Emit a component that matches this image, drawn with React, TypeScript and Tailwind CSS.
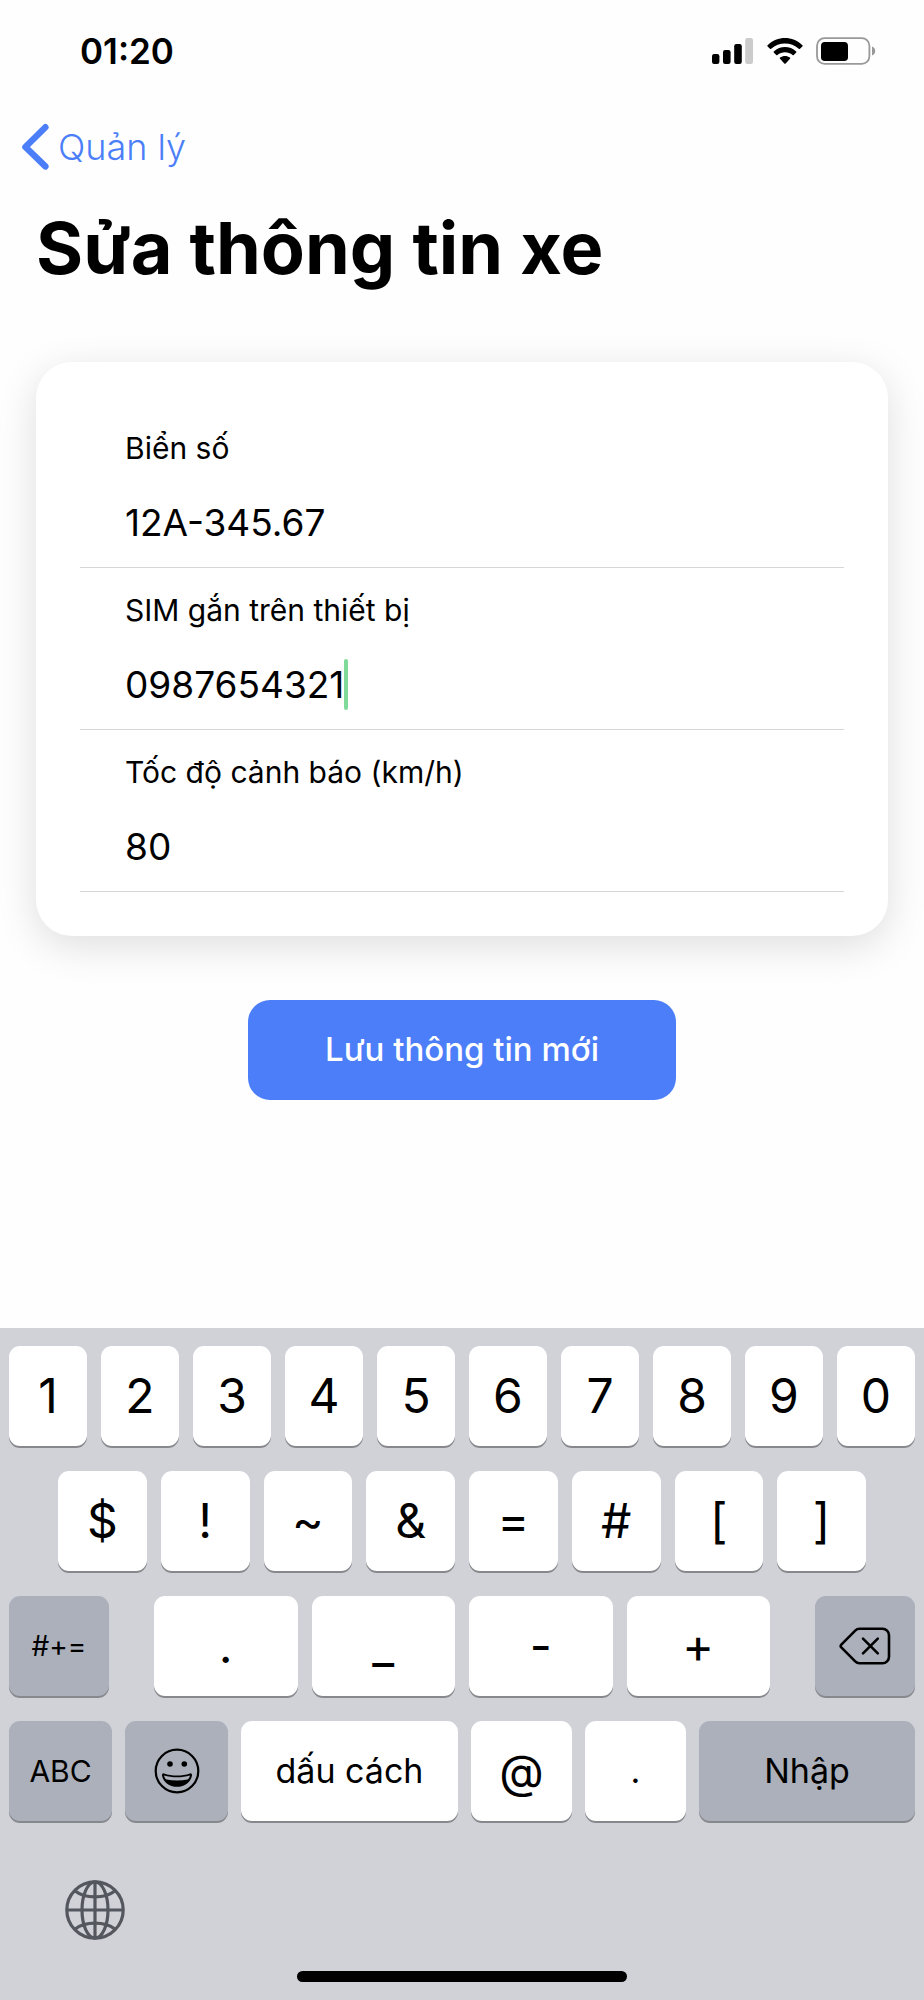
import { useState } from "react";
import type { ReactNode } from "react";

function SignalIcon() {
  return (
    <svg width="42" height="28" viewBox="0 0 42 28" aria-hidden="true">
      <rect x="0" y="17" width="7.4" height="10" rx="2.2" />
      <rect x="11" y="13" width="7.6" height="14" rx="2.2" />
      <rect x="22.2" y="7" width="7.6" height="20" rx="2.2" />
      <rect x="33.2" y="1" width="7.8" height="26" rx="2.2" fill="#cbcbcb" />
    </svg>
  );
}

function WifiIcon() {
  return (
    <svg width="36" height="28" viewBox="0 0 36 28" aria-hidden="true">
      <path d="M0.6 8.2 C10.4 -1.4 25.6 -1.4 35.4 8.2 C35.8 8.6 35.8 9 35.4 9.4 L33 11.8 C32.6 12.2 32.2 12.2 31.8 11.8 C24 4.6 12 4.6 4.2 11.8 C3.8 12.2 3.4 12.2 3 11.8 L0.6 9.4 C0.2 9 0.2 8.6 0.6 8.2 Z" />
      <path d="M6.8 14.4 C13.2 8.6 22.8 8.6 29.2 14.4 C29.6 14.8 29.6 15.2 29.2 15.6 L26.8 18 C26.4 18.4 26 18.4 25.6 18 C21.2 14.2 14.8 14.2 10.4 18 C10 18.4 9.6 18.4 9.2 18 L6.8 15.6 C6.4 15.2 6.4 14.8 6.8 14.4 Z" />
      <path d="M13 20.6 C15.9 18.5 20.1 18.5 23 20.6 C23.4 20.9 23.4 21.4 23 21.8 L18.7 26.4 C18.3 26.8 17.7 26.8 17.3 26.4 L13 21.8 C12.6 21.4 12.6 20.9 13 20.6 Z" />
    </svg>
  );
}

function BatteryIcon() {
  return (
    <svg width="60" height="28" viewBox="0 0 60 28" aria-hidden="true">
      <rect x="1" y="1.2" width="52.4" height="25.6" rx="7.6" fill="none" stroke="#999999" strokeWidth="1.8" />
      <rect x="5" y="5" width="27" height="19" rx="3.8" />
      <path d="M56 9.6 C58.2 10.4 59.2 12 59.2 14 C59.2 16 58.2 17.6 56 18.4 Z" fill="#999999" />
    </svg>
  );
}

function BackspaceIcon() {
  return (
    <svg width="52" height="38" viewBox="0 0 52 38" fill="none" stroke="#000" strokeWidth="2.6" strokeLinecap="round" strokeLinejoin="round" aria-hidden="true">
      <path d="M20.5 1.8 H43.5 A6.5 6.5 0 0 1 50 8.3 V29.7 A6.5 6.5 0 0 1 43.5 36.2 H20.5 C18.6 36.2 17.4 35.6 16.2 34.4 L2.3 20.4 Q1 19 2.3 17.6 L16.2 3.6 C17.4 2.4 18.6 1.8 20.5 1.8 Z" />
      <path d="M24 11.6 L38.8 26.4 M38.8 11.6 L24 26.4" />
    </svg>
  );
}

function SmileyIcon() {
  return (
    <svg width="46" height="46" viewBox="0 0 46 46" aria-hidden="true">
      <circle cx="23" cy="23" r="21.3" fill="none" stroke="#000" strokeWidth="2.2" />
      <circle cx="16" cy="16" r="2.8" />
      <circle cx="30.3" cy="16" r="2.8" />
      <path fillRule="evenodd" d="M10 25.4 C18 28.2 28 28.2 36 25.4 Q38.2 25 38 27.4 C36.6 34.6 30.4 38.8 23 38.8 C15.6 38.8 9.4 34.6 8 27.4 Q7.8 25 10 25.4 Z M10 27.4 C10.6 29.4 11.2 30.8 12.4 31.4 C19 32.8 27 32.8 33.6 31.4 C34.8 30.8 35.4 29.4 36 27.4 C28 29.8 18 29.8 10 27.4 Z" />
    </svg>
  );
}

function GlobeIcon() {
  return (
    <svg width="60" height="60" viewBox="0 0 60 60" fill="none" stroke="#54575e" strokeWidth="3.2" aria-hidden="true">
      <circle cx="30" cy="30" r="28.2" />
      <ellipse cx="30" cy="30" rx="13" ry="28.2" />
      <path d="M30 1.8 V58.2 M1.8 30 H58.2" />
      <path d="M10.2 11 C20 18.8 40 18.8 49.8 11 M10.2 49 C20 41.2 40 41.2 49.8 49" />
    </svg>
  );
}

type KeyProps = {
  label: string;
  children?: ReactNode;
  tone?: "light" | "dark";
  size?: string;
};

function Key({ label, children, tone = "light", size = "text-5xl" }: KeyProps) {
  const color = tone === "light" ? "bg-white" : "bg-[#abb0bb]";
  return (
    <button
      type="button"
      aria-label={children ? label : undefined}
      className={`flex h-[100px] min-w-0 items-center justify-center rounded-[11px] leading-none shadow-[0_2px_0_#87888c] ${color} ${size}`}
    >
      {children ?? label}
    </button>
  );
}

type FieldProps = {
  id: string;
  label: string;
  value: string;
  onChange: (value: string) => void;
  active?: boolean;
};

function Field({ id, label, value, onChange, active = false }: FieldProps) {
  return (
    <div className="border-b border-[#d6d6d6] px-[45px] pt-[22px] pb-px">
      <label htmlFor={id} className="block text-[30px] leading-10">
        {label}
      </label>
      <div className="mt-2.5 flex h-[88px] items-center">
        <input
          id={id}
          value={value}
          onChange={(e) => onChange(e.target.value)}
          className={`h-full min-w-0 bg-transparent text-[37px] outline-none ${active ? "field-sizing-content caret-transparent" : "w-full"}`}
        />
        {active && <span className="h-[51px] w-1 shrink-0 rounded-sm bg-[#80db9b]" />}
      </div>
    </div>
  );
}

const digits = ["1", "2", "3", "4", "5", "6", "7", "8", "9", "0"];
const symbols = ["$", "!", "~", "&", "=", "#", "[", "]"];
const marks = [".", "_", "-", "+"];

export default function App() {
  const [plate, setPlate] = useState("12A-345.67");
  const [sim, setSim] = useState("0987654321");
  const [speed, setSpeed] = useState("80");

  return (
    <div className="flex min-h-screen flex-col bg-[#fefefe] font-['Inter','Noto_Sans',sans-serif] text-black">
      <header>
        <div className="flex h-[102px] items-center justify-between pr-12 pl-20">
          <time className="text-[35px] font-semibold">01:20</time>
          <div className="flex items-center gap-[13px]">
            <SignalIcon />
            <WifiIcon />
            <BatteryIcon />
          </div>
        </div>
        <nav className="flex h-[90px] items-center pl-5">
          <a href="#manage" className="flex items-center gap-2 text-4xl font-light text-[#4b7ef8]">
            <svg width="30" height="48" viewBox="0 0 30 48" fill="none" stroke="currentColor" strokeWidth="6.4" strokeLinecap="round" strokeLinejoin="round" aria-hidden="true">
              <path d="M25.4 4.2 L5.4 24 L25.4 43.4" />
            </svg>
            Quản lý
          </a>
        </nav>
      </header>

      <main className="flex flex-col px-9 pt-2">
        <h1 className="text-7xl leading-[96px] font-bold">Sửa thông tin xe</h1>
        <form className="mt-[66px] flex flex-col items-center" onSubmit={(e) => e.preventDefault()}>
          <div className="w-full rounded-[36px] bg-white p-11 shadow-[0_10px_40px_rgba(0,0,0,0.13)]">
            <Field id="plate" label="Biển số" value={plate} onChange={setPlate} />
            <Field id="sim" label="SIM gắn trên thiết bị" value={sim} onChange={setSim} active />
            <Field id="speed" label="Tốc độ cảnh báo (km/h)" value={speed} onChange={setSpeed} />
          </div>
          <button type="submit" className="mt-16 h-[100px] w-[428px] rounded-[22px] bg-[#4b7ef8] text-[33px] font-medium text-white">
            Lưu thông tin mới
          </button>
        </form>
      </main>

      <section aria-label="Bàn phím" className="mt-auto bg-[#d1d2d8] px-[9px] pt-[18px] pb-[18px]">
        <div className="flex flex-col gap-[25px]">
          <div className="grid grid-cols-10 gap-3.5">
            {digits.map((d) => (
              <Key key={d} label={d} />
            ))}
          </div>
          <div className="grid grid-cols-8 gap-3.5 px-[49px]">
            {symbols.map((s) => (
              <Key key={s} label={s} />
            ))}
          </div>
          <div className="grid grid-cols-[100fr_616fr_100fr] gap-[45px]">
            <Key label="#+=" tone="dark" size="text-[28px]" />
            <div className="grid grid-cols-4 gap-3.5">
              {marks.map((m) => (
                <Key key={m} label={m} />
              ))}
            </div>
            <Key label="Xoá" tone="dark">
              <BackspaceIcon />
            </Key>
          </div>
          <div className="grid grid-cols-[103fr_103fr_217fr_101fr_101fr_216fr] gap-[13px]">
            <Key label="ABC" tone="dark" size="text-[30px]" />
            <Key label="Biểu tượng cảm xúc" tone="dark">
              <SmileyIcon />
            </Key>
            <Key label="dấu cách" size="text-[34px]" />
            <Key label="@" size="text-[46px]" />
            <Key label="." size="text-[34px]" />
            <Key label="Nhập" tone="dark" size="text-[34px]" />
          </div>
        </div>
        <div className="mt-[59px] flex pl-14">
          <button type="button" aria-label="Đổi ngôn ngữ">
            <GlobeIcon />
          </button>
        </div>
        <div className="mx-auto mt-[31px] h-[11px] w-[330px] rounded-full bg-black" />
      </section>
    </div>
  );
}
